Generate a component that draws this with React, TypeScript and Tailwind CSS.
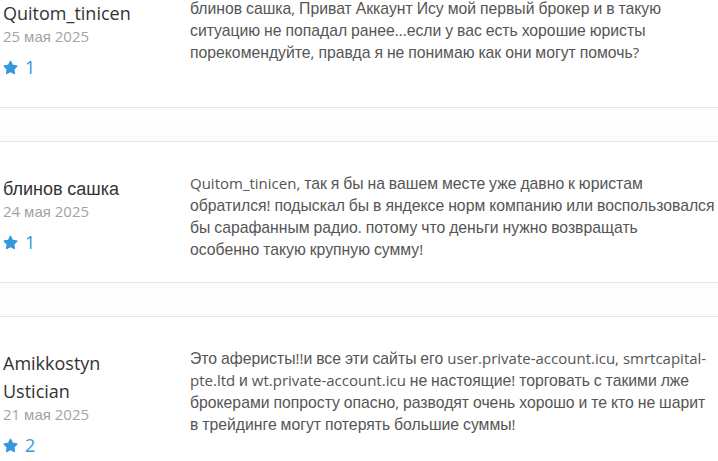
import React from 'react';
import { FaStar } from 'react-icons/fa';

type Review = {
  author: string;
  date: string;
  votes: number;
  text: string;
};

// line breaks follow the original page
const reviews: Review[] = [
  {
    author: 'Quitom_tinicen',
    date: '25 мая 2025',
    votes: 1,
    text: 'блинов сашка, Приват Аккаунт Ису мой первый брокер и в такую\nситуацию не попадал ранее...если у вас есть хорошие юристы\nпорекомендуйте, правда я не понимаю как они могут помочь?',
  },
  {
    author: 'блинов сашка',
    date: '24 мая 2025',
    votes: 1,
    text: 'Quitom_tinicen, так я бы на вашем месте уже давно к юристам\nобратился! подыскал бы в яндексе норм компанию или воспользовался\nбы сарафанным радио. потому что деньги нужно возвращать\nособенно такую крупную сумму!',
  },
  {
    author: 'Amikkostyn Ustician',
    date: '21 мая 2025',
    votes: 2,
    text: 'Это аферисты!!и все эти сайты его user.private-account.icu, smrtcapital-\npte.ltd и wt.private-account.icu не настоящие! торговать с такими лже\nброкерами попросту опасно, разводят очень хорошо и те кто не шарит\nв трейдинге могут потерять большие суммы!',
  },
];

// Latin, digits and punctuation come out in the web font, Cyrillic falls back to Arial
function Mixed({ text, cyr }: { text: string; cyr?: string }) {
  return (
    <>
      {text.split(/([\u0400-\u04FF]+)/).map((part, i) =>
        /[\u0400-\u04FF]/.test(part) ? (
          <span key={i} className={`font-['Liberation_Sans',Arial,sans-serif] leading-none ${cyr ?? ''}`}>
            {part}
          </span>
        ) : (
          <span key={i} className="leading-none">{part}</span>
        )
      )}
    </>
  );
}

function ReviewItem({ review, first }: { review: Review; first?: boolean }) {
  return (
    <div className={first ? 'flex pb-[21px] -mt-px' : 'flex pt-[32px] pb-[21px]'}>
      <div className="w-[190px] shrink-0 pl-[3px] pr-[30px] pb-[9px]">
        <div className="text-[18px] leading-[28px] text-[#333]">
          <Mixed text={review.author} />
        </div>
        <div className="text-[15px] leading-[18px] text-[#a3a3a3]">
          <Mixed text={review.date} />
        </div>
        <div className="mt-[12px] flex items-center gap-[7px] h-[20px] text-[18px] text-[#3498db]">
          <FaStar className="w-[15px] h-[15px]" />
          <span className="leading-[20px]">{review.votes}</span>
        </div>
      </div>
      <div className="flex-1 min-w-0 -mt-[2px] whitespace-pre-line text-[15px] leading-[22px] text-[#555]">
        <Mixed text={review.text} cyr="text-[15.75px]" />
      </div>
    </div>
  );
}

export default function App() {
  return (
    <div className="w-[718px] h-[461px] overflow-hidden bg-white font-['Open_Sans','Liberation_Sans',sans-serif]">
      {reviews.map((r, i) => (
        <React.Fragment key={i}>
          {i > 0 && <div className="h-[35px] border-y border-[#e6e6e6] bg-[#fdfdfd]" />}
          <ReviewItem review={r} first={i === 0} />
        </React.Fragment>
      ))}
    </div>
  );
}
